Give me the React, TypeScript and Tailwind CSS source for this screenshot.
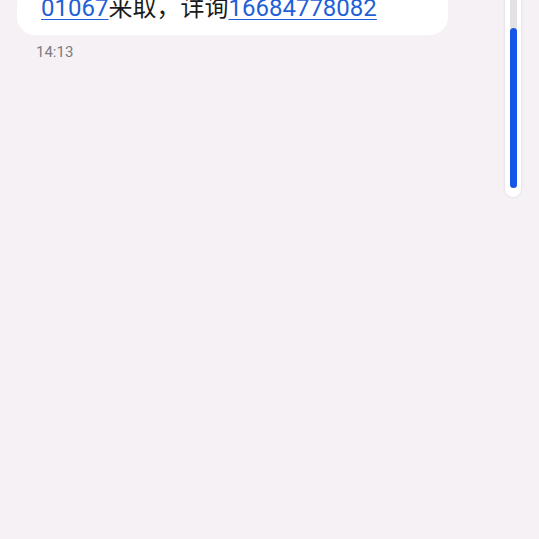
export default function App() {
  return (
    <div
      className="relative h-[539px] w-[539px] overflow-hidden bg-[#f5f1f4]"
      style={{ fontFamily: 'Roboto, "Noto Sans CJK SC", sans-serif' }}
    >
      {/* Message list */}
      <div className="flex flex-col items-start pl-[17px]">
        <div className="mt-[-14px] w-[431px] rounded-[18px] bg-white pb-[11px] pl-[24px] pr-4 pt-[6px]">
          <p className="text-[24px] leading-[32px] text-[#1b1b1b]">
            <a className="text-[#1f5fd8] underline decoration-1 underline-offset-[3px]">01067</a>
            <span>来取，详询</span>
            <a className="text-[#1f5fd8] underline decoration-1 underline-offset-[3px]">16684778082</a>
          </p>
        </div>
        <span className="ml-[19px] mt-[7px] text-[15px] leading-[20px] text-[#7d7b7d]">14:13</span>
      </div>

      {/* Scrollbar overlay */}
      <div className="absolute right-[18px] top-[-10px] flex h-[207px] w-[16px] justify-center rounded-full bg-white pb-[9px] pt-[2px] shadow-[0_0_3px_rgba(0,0,0,0.12)]">
        <div className="flex w-[7px] flex-col rounded-full bg-[#e3e1e3]">
          <div className="mt-[36px] w-full flex-1 rounded-full bg-[#1556e8]" />
        </div>
      </div>
    </div>
  )
}
